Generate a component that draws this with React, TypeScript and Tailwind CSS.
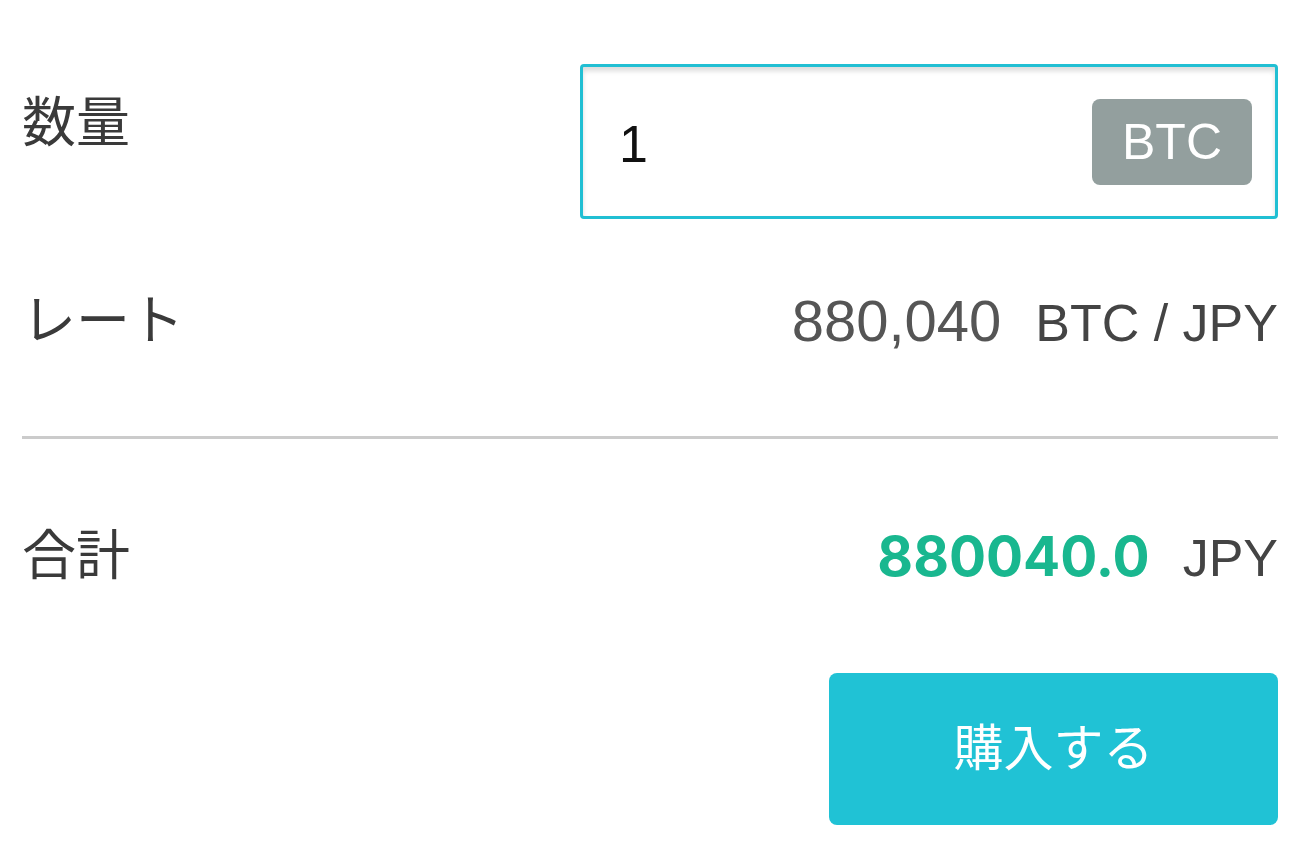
import React from "react";

const FONT = { fontFamily: '"Liberation Sans", "Noto Sans CJK JP", sans-serif' };

export default function App() {
  return (
    <div
      className="w-[1300px] h-[861px] bg-white flex flex-col px-[22px] pt-[64px] overflow-hidden"
      style={FONT}
    >
      {/* 数量 row */}
      <div className="flex items-start justify-between h-[155px]">
        <div className="mt-[32px] text-[54px] leading-none text-[#3a3a3a]">数量</div>
        <div className="w-[698px] h-[155px] border-[3px] border-[#21bfd3] rounded-[4px] shadow-[inset_0_4px_5px_rgba(0,0,0,0.14)] flex items-center justify-between pl-[36px] pr-[23px]">
          <span className="mt-[4px] text-[52px] leading-none text-[#111]">1</span>
          <span className="w-[160px] h-[86px] rounded-[8px] bg-[#939f9e] text-white text-[50px] leading-none flex items-center justify-center">
            BTC
          </span>
        </div>
      </div>

      {/* レート row */}
      <div className="flex items-center justify-between h-[204px]">
        <div className="text-[54px] leading-none text-[#3a3a3a]">レート</div>
        <div className="flex items-baseline">
          <span className="text-[58px] leading-none text-[#555]">880,040</span>
          <span className="ml-[34px] text-[52px] leading-none text-[#444]">BTC / JPY</span>
        </div>
      </div>

      <div className="mt-[13px] h-[3px] bg-[#cbcbcb]" />

      {/* 合計 row */}
      <div className="flex items-center justify-between h-[234px]">
        <div className="text-[54px] leading-none text-[#3a3a3a]">合計</div>
        <div className="flex items-baseline">
          <span
            className="text-[55px] leading-none font-bold text-[#19b78f]"
            style={{ fontFamily: 'Inter, "Liberation Sans", sans-serif' }}
          >
            880040.0
          </span>
          <span className="ml-[33px] text-[52px] leading-none text-[#444]">JPY</span>
        </div>
      </div>

      <div className="flex justify-end">
        <button className="w-[449px] h-[152px] rounded-[8px] bg-[#20c2d5] text-white text-[50px] leading-none flex items-center justify-center">
          購入する
        </button>
      </div>
    </div>
  );
}
